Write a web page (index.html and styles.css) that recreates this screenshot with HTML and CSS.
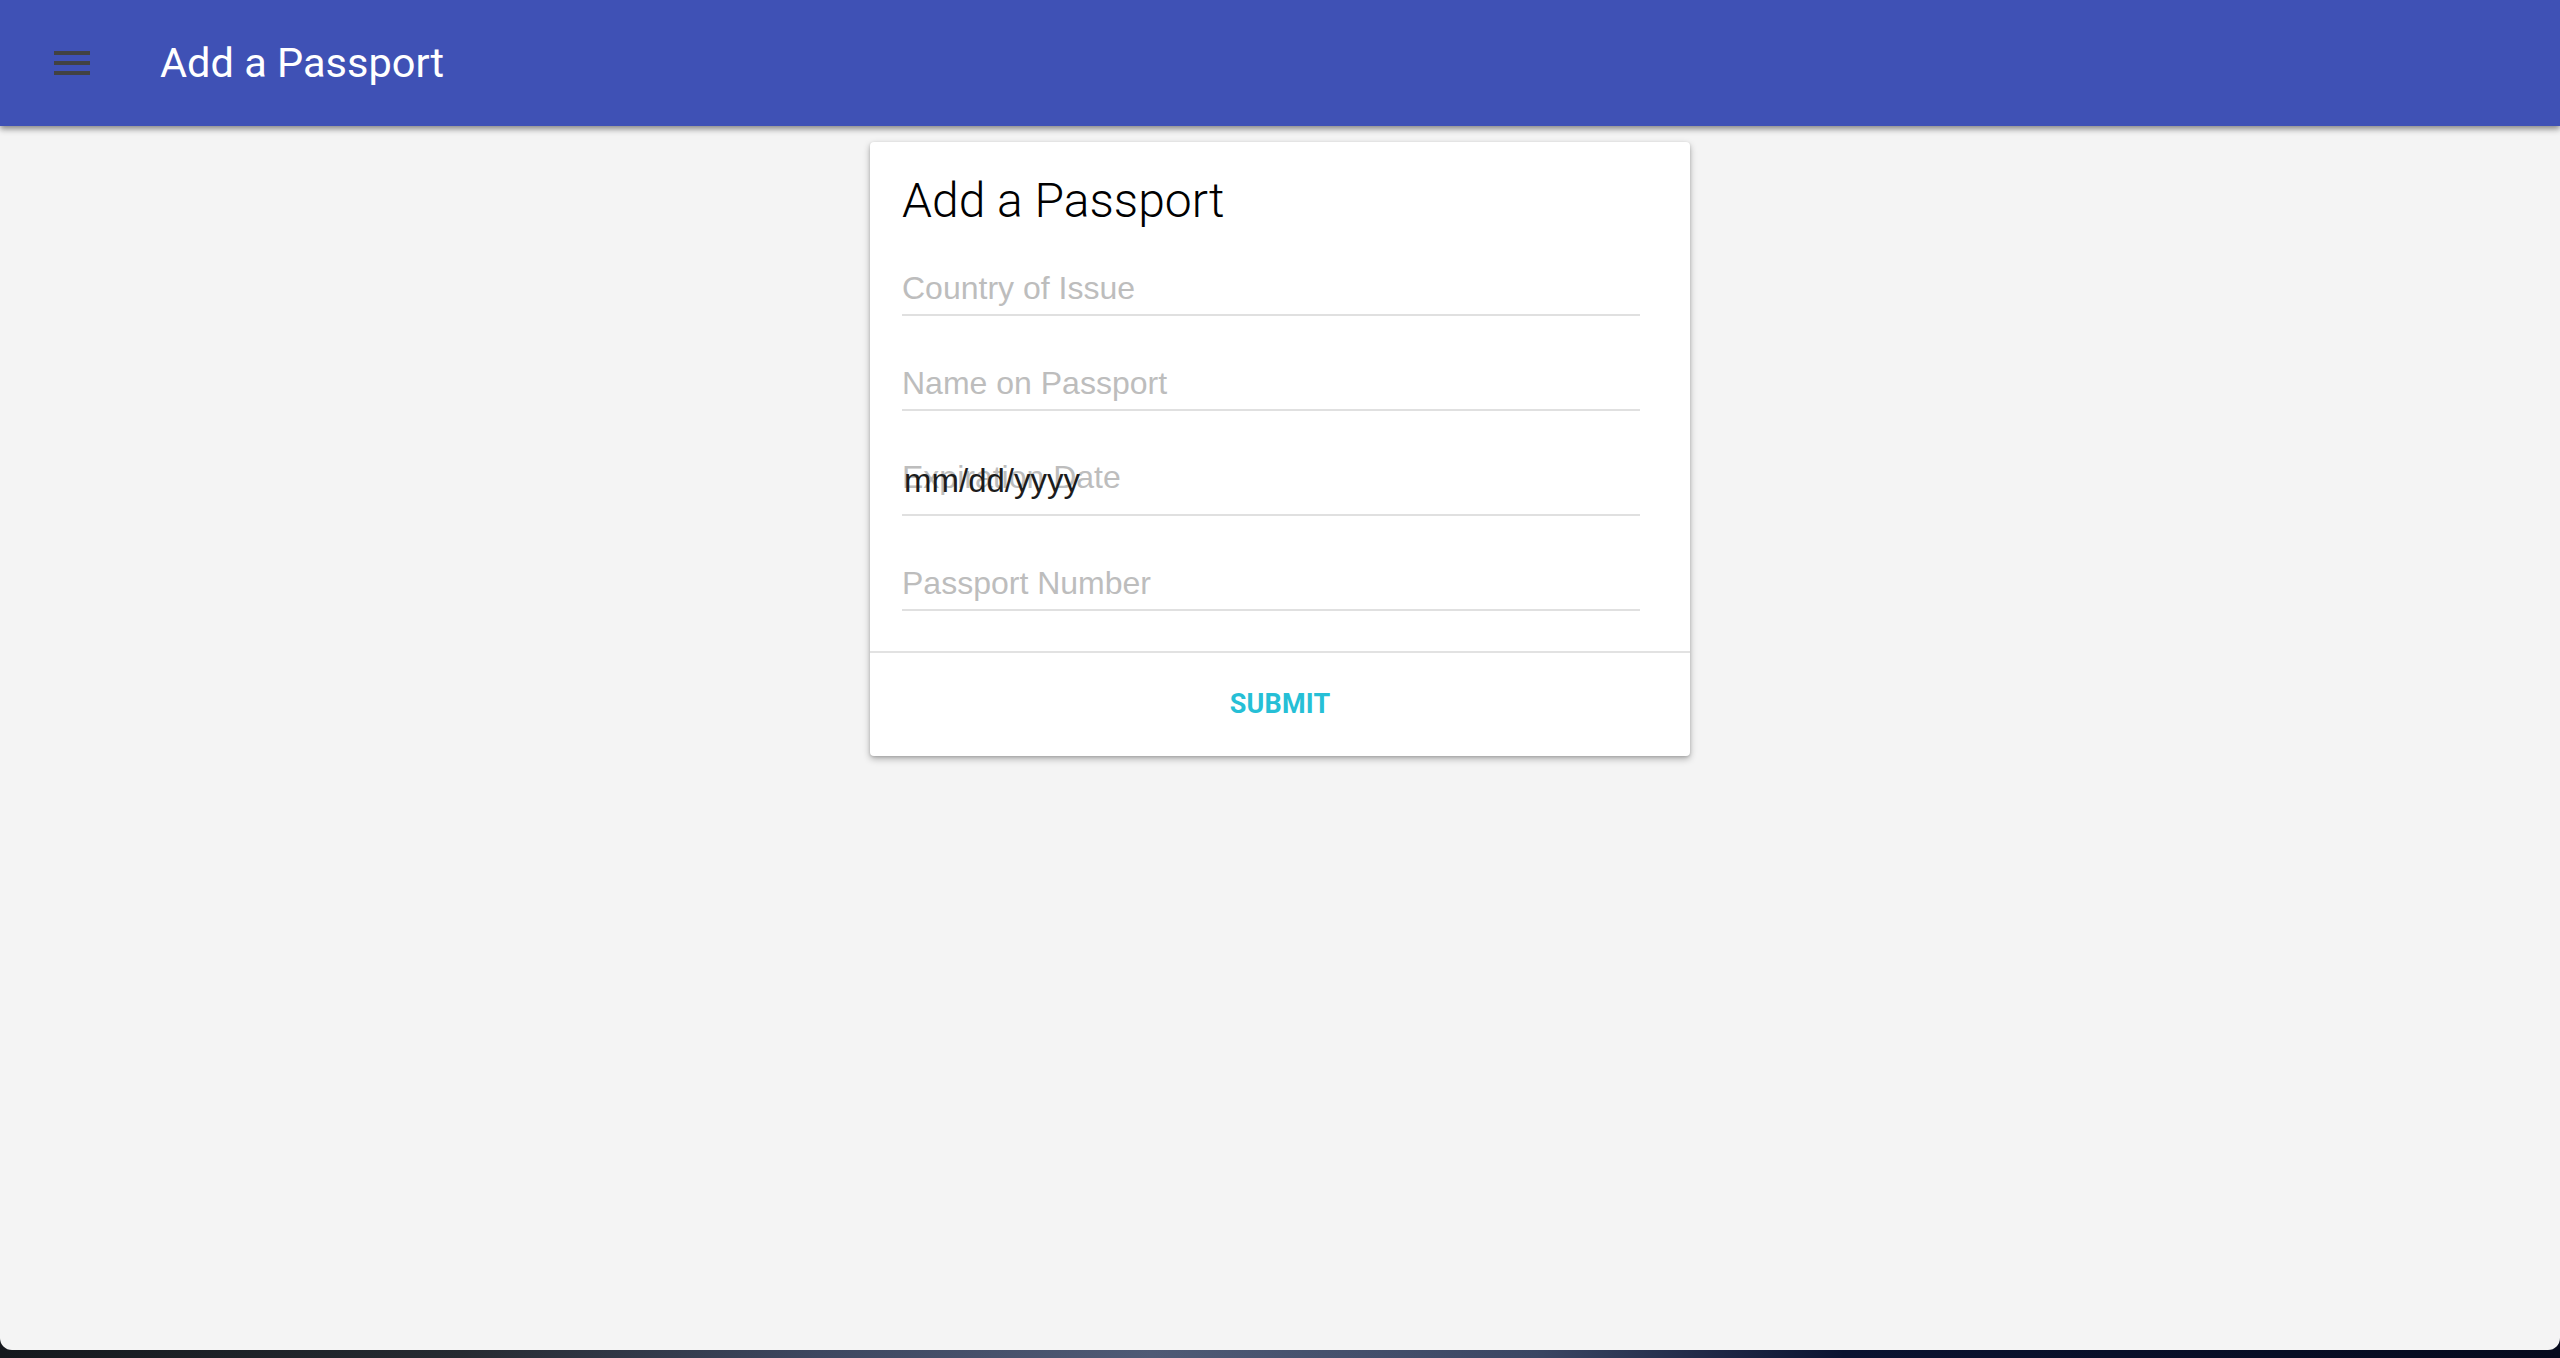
FILE: index.html
```html
<!DOCTYPE html>
<html lang="en">
<head>
<meta charset="utf-8">
<title>Add a Passport</title>
<link rel="stylesheet" href="styles.css">
</head>
<body>
<div class="window">
  <header class="toolbar">
    <button class="menu-btn" aria-label="Menu">
      <svg viewBox="0 0 24 24" width="48" height="48"><path d="M3 18h18v-2H3v2zm0-5h18v-2H3v2zm0-7v2h18V6H3z" fill="#424242"/></svg>
    </button>
    <h1 class="toolbar-title">Add a Passport</h1>
  </header>
  <main class="content">
    <section class="card">
      <div class="card-body">
        <h2 class="card-title">Add a Passport</h2>
        <div class="field field-first">
          <div class="field-input placeholder">Country of Issue</div>
        </div>
        <div class="field">
          <div class="field-input placeholder">Name on Passport</div>
        </div>
        <div class="field field-date">
          <span class="float-label">Expiration Date</span>
          <div class="field-input date-value">mm/dd/yyyy</div>
        </div>
        <div class="field">
          <div class="field-input placeholder">Passport Number</div>
        </div>
      </div>
      <div class="card-actions">
        <button class="submit-btn">SUBMIT</button>
      </div>
    </section>
  </main>
</div>
<div class="desktop"></div>
</body>
</html>
```

FILE: styles.css
```css
html, body {
  margin: 0;
  padding: 0;
}
body {
  width: 2560px;
  height: 1358px;
  overflow: hidden;
  background: linear-gradient(90deg, #15181d 0%, #262a31 18%, #3e4760 32%, #4f5a75 45%, #3b4663 60%, #0b1230 72%, #060a1d 100%);
  font-family: Roboto, "Liberation Sans", sans-serif;
}
.window {
  height: 1350px;
  background: #f4f4f4;
  border-radius: 0 0 12px 12px;
  overflow: hidden;
  display: flex;
  flex-direction: column;
}
.toolbar {
  position: relative;
  z-index: 2;
  height: 126px;
  flex: 0 0 126px;
  background: #3f51b5;
  box-shadow: 0 3px 6px rgba(0, 0, 0, 0.45);
  display: flex;
  align-items: center;
  padding-left: 48px;
  gap: 64px;
}
.menu-btn {
  width: 48px;
  height: 48px;
  padding: 0;
  margin: 0;
  border: 0;
  background: transparent;
  display: block;
}
.menu-btn svg {
  display: block;
}
.toolbar-title {
  margin: 0;
  color: #ffffff;
  font-family: Roboto, sans-serif;
  font-weight: 400;
  font-size: 41.5px;
  line-height: 48px;
}
.content {
  flex: 1;
  padding-top: 16px;
}
.card {
  width: 820px;
  margin: 0 auto;
  background: #ffffff;
  border-radius: 4px;
  box-shadow: 0 3px 7px rgba(0, 0, 0, 0.28), 0 1px 3px rgba(0, 0, 0, 0.15);
}
.card-body {
  padding: 31px 32px 40px 32px;
}
.card-title {
  margin: 0;
  font-family: Roboto, sans-serif;
  font-weight: 300;
  font-size: 48px;
  line-height: 56px;
  color: #000000;
}
.field {
  position: relative;
  width: 738px;
  padding-top: 49px;
}
.field-first {
  padding-top: 41px;
}
.field-input {
  font-family: "Liberation Sans", Arial, sans-serif;
  font-size: 32px;
  line-height: 36px;
  padding-bottom: 8px;
  border-bottom: 2px solid #e0e0e0;
}
.placeholder {
  color: #bdbdbd;
}
.field-date {
  padding-top: 52px;
}
.float-label {
  position: absolute;
  left: 0;
  top: 48px;
  font-family: "Liberation Sans", Arial, sans-serif;
  font-size: 32px;
  line-height: 36px;
  color: #bdbdbd;
}
.date-value {
  position: relative;
  font-size: 33px;
  color: #1c1c1c;
  padding-left: 2px;
  padding-bottom: 15px;
}
.card-actions {
  border-top: 2px solid #e2e2e2;
  padding: 33px 0 34px 0;
  display: flex;
  justify-content: center;
}
.submit-btn {
  margin: 0;
  padding: 0;
  border: 0;
  background: transparent;
  font-family: Roboto, sans-serif;
  font-weight: 700;
  font-size: 27px;
  line-height: 36px;
  color: #26bfd6;
  letter-spacing: 0.2px;
}
.desktop {
  height: 8px;
}
```
